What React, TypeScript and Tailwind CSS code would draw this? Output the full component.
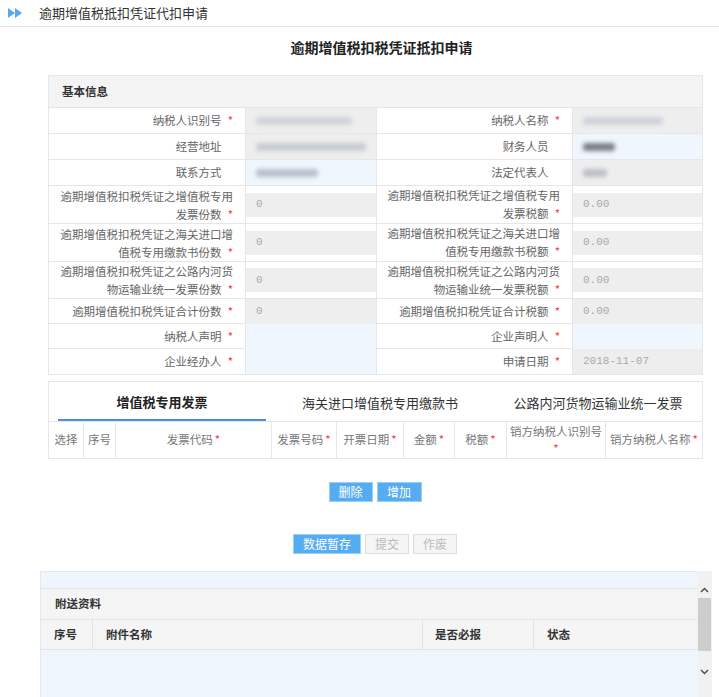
const font = { fontFamily: '"Microsoft YaHei", "Noto Sans CJK SC", sans-serif' };

type Row = { l1: string; r1?: boolean; v1: string; k1: "gray" | "blue"; l2: string; r2?: boolean; v2: string; k2: "gray" | "blue"; tall?: boolean; h: string };

const rows: Row[] = [
  { l1: "纳税人识别号", r1: true, v1: "", k1: "gray", l2: "纳税人名称", r2: true, v2: "", k2: "gray", h: "h-[26px]" },
  { l1: "经营地址", v1: "", k1: "gray", l2: "财务人员", v2: "", k2: "blue", h: "h-[26px]" },
  { l1: "联系方式", v1: "", k1: "blue", l2: "法定代表人", v2: "", k2: "gray", h: "h-[26px]" },
  { l1: "逾期增值税扣税凭证之增值税专用\n发票份数", r1: true, v1: "0", k1: "gray", l2: "逾期增值税扣税凭证之增值税专用\n发票税额", r2: true, v2: "0.00", k2: "gray", tall: true, h: "h-[38px]" },
  { l1: "逾期增值税扣税凭证之海关进口增\n值税专用缴款书份数", r1: true, v1: "0", k1: "gray", l2: "逾期增值税扣税凭证之海关进口增\n值税专用缴款书税额", r2: true, v2: "0.00", k2: "gray", tall: true, h: "h-[38px]" },
  { l1: "逾期增值税扣税凭证之公路内河货\n物运输业统一发票份数", r1: true, v1: "0", k1: "gray", l2: "逾期增值税扣税凭证之公路内河货\n物运输业统一发票税额", r2: true, v2: "0.00", k2: "gray", tall: true, h: "h-[37px]" },
  { l1: "逾期增值税扣税凭证合计份数", r1: true, v1: "0", k1: "gray", l2: "逾期增值税扣税凭证合计税额", r2: true, v2: "0.00", k2: "gray", h: "h-[25px]" },
  { l1: "纳税人声明", r1: true, v1: "", k1: "blue", l2: "企业声明人", r2: true, v2: "", k2: "blue", h: "h-[25px]" },
  { l1: "企业经办人", r1: true, v1: "", k1: "blue", l2: "申请日期", r2: true, v2: "2018-11-07", k2: "gray", h: "h-[26px]" },
];

// blurred, masked personal data in the screenshot
const blurs: Record<string, string> = {
  "0-1": "w-[96px] bg-[#cfd3da]",
  "0-2": "w-[80px] bg-[#cfd3da]",
  "1-1": "w-[118px] bg-[#c8ccd2]",
  "1-2": "w-[32px] bg-[#7b8088]",
  "2-1": "w-[62px] bg-[#b9c0cc]",
  "2-2": "w-[24px] bg-[#bcc0c6]",
};

function Label({ text, req, tall }: { text: string; req?: boolean; tall?: boolean }) {
  const lines = text.split("\n");
  return (
    <div className={`flex flex-col items-end justify-center pr-[12px] text-right text-[11.5px] text-[#666] ${tall ? "leading-[18px]" : "leading-[25px]"}`}>
      {lines.map((ln, i) => (
        <div key={i}>
          {ln}
          {i === lines.length - 1 && req ? <span className="ml-[6px] text-[#f33]">*</span> : i === lines.length - 1 ? <span className="invisible ml-[6px]">*</span> : null}
        </div>
      ))}
    </div>
  );
}

function Value({ v, kind, tall, blur }: { v: string; kind: "gray" | "blue"; tall?: boolean; blur?: string }) {
  return (
    <div className="flex items-center border-l border-[#e6e6e6]">
      <div
        className={`flex h-[24px] w-full items-center px-[10px] text-[11px] text-[#aaa] ${kind === "gray" ? "bg-[#eeeeee]" : "bg-[#f0f6fd]"} ${tall ? "" : "h-full"}`}
        style={{ fontFamily: '"Liberation Mono", "Noto Sans CJK SC", monospace' }}
      >
        {blur ? <div className={`h-[8px] rounded-[3px] blur-[2px] ${blur}`} /> : v}
      </div>
    </div>
  );
}

const cols = [
  { t: "选择", w: "w-[34px]" },
  { t: "序号", w: "w-[32px]" },
  { t: "发票代码", w: "w-[156px]", r: true },
  { t: "发票号码", w: "w-[65px]", r: true },
  { t: "开票日期", w: "w-[67px]", r: true },
  { t: "金额", w: "w-[51px]", r: true },
  { t: "税额", w: "w-[52px]", r: true },
  { t: "销方纳税人识别号", w: "w-[99px]", r: true, two: true },
  { t: "销方纳税人名称", w: "flex-1", r: true },
];

export default function App() {
  return (
    <div className="relative h-[697px] w-[719px] overflow-hidden bg-white text-[#333]" style={font}>
      {/* top bar */}
      <div className="flex h-[27px] items-center border-b border-[#e5e5e5] pl-[8px]">
        <svg width="15" height="10" viewBox="0 0 15 10">
          <polygon points="0,0 7,5 0,10" fill="#5aa6f2" />
          <polygon points="7,0 14,5 7,10" fill="#5aa6f2" />
        </svg>
        <span className="ml-[16px] text-[13px] text-[#333]">逾期增值税抵扣凭证代扣申请</span>
      </div>

      <div className="pl-[44px] pt-[10px] text-center text-[14px] font-bold leading-[21px] text-[#222]">逾期增值税扣税凭证抵扣申请</div>

      {/* base info */}
      <div className="mx-[48px] mt-[17px] w-[655px] border border-[#e6e6e6]">
        <div className="flex h-[31px] items-center bg-[#f4f4f4] pl-[13px] text-[11.5px] font-bold text-[#333]">基本信息</div>
        {rows.map((r, i) => (
          <div key={i} className={`grid grid-cols-[196px_131px_196px_1fr] border-t border-[#e6e6e6] ${r.h}`}>
            <Label text={r.l1} req={r.r1} tall={r.tall} />
            <Value v={r.v1} kind={r.k1} tall={r.tall} blur={blurs[`${i}-1`]} />
            <div className="border-l border-[#e6e6e6]">
              <Label text={r.l2} req={r.r2} tall={r.tall} />
            </div>
            <Value v={r.v2} kind={r.k2} tall={r.tall} blur={blurs[`${i}-2`]} />
          </div>
        ))}
      </div>

      {/* tabs */}
      <div className="mx-[48px] mt-[6px] w-[655px] border border-[#e6e6e6]">
        <div className="flex h-[39px] items-stretch pl-[9px] text-[13px]">
          <div className="flex w-[208px] items-center justify-center border-b-2 border-[#4a8fe7] pt-[2px] font-bold text-[#222]">增值税专用发票</div>
          <div className="flex w-[228px] items-center justify-center pt-[2px] text-[#333]">海关进口增值税专用缴款书</div>
          <div className="flex flex-1 items-center justify-center pt-[2px] text-[#333]">公路内河货物运输业统一发票</div>
        </div>
        <div className="flex h-[37px] border-t border-[#e6e6e6] text-[11.5px] text-[#777]">
          {cols.map((c, i) => (
            <div key={i} className={`${c.w} flex items-center justify-center text-center ${i > 0 ? "border-l border-[#e6e6e6]" : ""}`}>
              {c.two ? (
                <div className="leading-[17px]">
                  <div>{c.t}</div>
                  <div className="text-[#f33]">*</div>
                </div>
              ) : (
                <span>
                  {c.t}
                  {c.r ? <span className="ml-[2px] text-[#f33]">*</span> : null}
                </span>
              )}
            </div>
          ))}
        </div>
      </div>

      {/* action buttons */}
      <div className="mt-[23px] flex justify-center gap-[4px] pl-[31px]">
        <button className="h-[20px] w-[44px] border border-[#9ccff5] bg-[#55acf0] text-[12px] text-white">删除</button>
        <button className="h-[20px] w-[45px] border border-[#9ccff5] bg-[#55acf0] text-[12px] text-white">增加</button>
      </div>

      <div className="mt-[32px] flex justify-center gap-[4px] pl-[31px]">
        <button className="h-[20px] w-[68px] border border-[#9ccff5] bg-[#55acf0] text-[12px] text-white">数据暂存</button>
        <button className="h-[20px] w-[44px] border border-[#ddd] bg-[#f5f5f5] text-[12px] text-[#bbb]">提交</button>
        <button className="h-[20px] w-[44px] border border-[#ddd] bg-[#f5f5f5] text-[12px] text-[#bbb]">作废</button>
      </div>

      {/* attachments */}
      <div className="ml-[40px] mt-[17px] flex h-[130px] w-[672px]">
        <div className="flex-1 border-l border-t border-[#e3e8ee] bg-[#f0f6fd] pt-[16px]">
          <div className="border-y border-[#e3e3e3] bg-[#f5f5f5]">
            <div className="flex h-[30px] items-center pl-[14px] text-[11.5px] font-bold text-[#333]">附送资料</div>
            <div className="flex h-[30px] border-t border-[#e3e3e3] text-[11.5px] font-bold text-[#333]">
              <div className="flex w-[51px] items-center pl-[13px]">序号</div>
              <div className="flex w-[330px] items-center border-l border-[#e3e3e3] pl-[13px]">附件名称</div>
              <div className="flex w-[111px] items-center border-l border-[#e3e3e3] pl-[12px]">是否必报</div>
              <div className="flex flex-1 items-center border-l border-[#e3e3e3] pl-[13px]">状态</div>
            </div>
          </div>
        </div>
        <div className="flex w-[15px] flex-col items-center bg-[#f1f1f1]">
          <div className="flex h-[26px] w-full items-center justify-center pt-[12px]">
            <svg width="9" height="6" viewBox="0 0 9 6"><polyline points="1,5 4.5,1.5 8,5" fill="none" stroke="#505050" strokeWidth="1.5" /></svg>
          </div>
          <div className="mt-[1px] h-[53px] w-[13px] bg-[#cdcdcd]" />
          <div className="flex flex-1 items-center justify-center pb-[8px]">
            <svg width="9" height="6" viewBox="0 0 9 6"><polyline points="1,1 4.5,4.5 8,1" fill="none" stroke="#505050" strokeWidth="1.5" /></svg>
          </div>
        </div>
      </div>
    </div>
  );
}
